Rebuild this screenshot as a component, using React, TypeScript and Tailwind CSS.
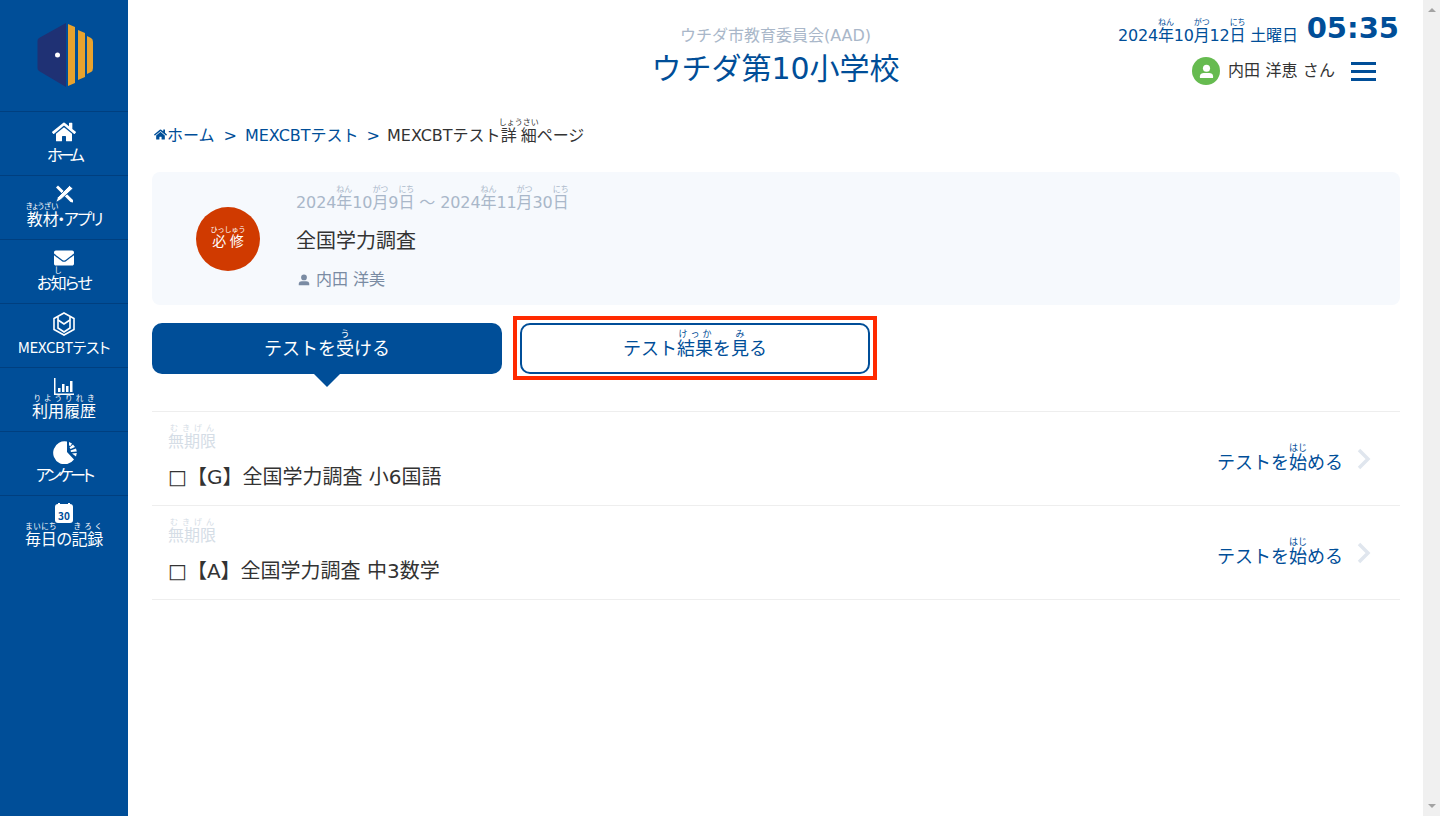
import type { JSX, ReactNode } from 'react';
import { FaHome, FaEnvelope } from 'react-icons/fa';

function R({ base, top, rt = '' }: { base: string; top: string; rt?: string }): JSX.Element {
  return (
    <ruby>
      {base}
      <rt className={rt}>{top}</rt>
    </ruby>
  );
}

function Side({ base, top }: { base: string; top: string }): JSX.Element {
  return <R base={base} top={top} rt="text-[7.5px] tracking-normal" />;
}

function Logo(): JSX.Element {
  return (
    <svg width="128" height="111" viewBox="0 0 128 111">
      <path d="M66 23V87L39 71Q37.500 70 37.500 68V41Q37.500 39 39 38Z" fill="#1f3174" />
      <circle cx="57.500" cy="55" r="2.500" fill="#fff" />
      <path d="M68 24L75 27V83L68 86Z" fill="#e8a32e" />
      <path d="M78 30L85 33V77L78 80Z" fill="#e8a32e" />
      <path d="M87 36L91 38Q93 39 93 42V68Q93 71 91 72L87 74Z" fill="#e8a32e" />
    </svg>
  );
}

function PersonIcon({ size, color }: { size: number; color: string }): JSX.Element {
  return (
    <svg width={size} height={size} viewBox="0 0 16 16" fill={color}>
      <circle cx="8" cy="4.500" r="3.800" />
      <path d="M1 15V13C1 10.500 3 9.500 5 9.500H11C13 9.500 15 10.500 15 13V15Z" />
    </svg>
  );
}

function ToolsIcon(): JSX.Element {
  return (
    <svg width="19" height="18" viewBox="0 0 19 18" fill="#fff">
      <path d="M1 2.500L3 0.500L18 15L18 17.500L15.500 17Z" />
      <path d="M14.500 0.500L18 3.500L6 14.500L1 17.500L2.500 12.500Z" stroke="#004e98" strokeWidth="0.800" />
    </svg>
  );
}

function CubeIcon(): JSX.Element {
  return (
    <svg width="22" height="24" viewBox="0 0 22 24" fill="none" stroke="#fff" strokeWidth="1.600">
      <path d="M11 1L21 6.500V17.500L11 23L1 17.500V6.500Z" />
      <path d="M5 5V16L11 20L17 16V5" />
      <path d="M5 8L11 12L17 8" />
    </svg>
  );
}

function ChartIcon(): JSX.Element {
  return (
    <svg width="20" height="18" viewBox="0 0 20 18" fill="#fff">
      <path d="M0 0H1.500V15.500H20V17H0Z" />
      <rect x="4" y="10" width="2.500" height="4" />
      <rect x="8" y="6" width="2.500" height="8" />
      <rect x="12" y="8" width="2.500" height="6" />
      <rect x="16" y="3" width="2.500" height="11" />
    </svg>
  );
}

function PieIcon(): JSX.Element {
  return (
    <svg width="24" height="24" viewBox="0 0 24 24" fill="#fff">
      <path d="M14 1.500V12L21 19.500A11.500 11.500 0 1 1 14 1.500Z" />
      <path d="M16 2L19 3.500L17.500 6L16 5.500Z" />
      <path d="M20 4.500L22 7L17.500 9L16.500 7.500Z" />
      <path d="M23 8.500L23.800 11.500L18 12L17.500 10.500Z" />
      <path d="M23.800 13L23 16.500L19 13.500Z" />
    </svg>
  );
}

function CalendarIcon(): JSX.Element {
  return (
    <div className="relative flex h-[19px] w-[18px] items-end justify-center rounded-[3px] bg-white">
      <span className="absolute left-[3px] top-[-1px] h-[4px] w-[2px] bg-white" />
      <span className="absolute right-[3px] top-[-1px] h-[4px] w-[2px] bg-white" />
      <span className="mb-[2px] text-[10px] font-bold leading-[11px] text-[#004e98]">30</span>
    </div>
  );
}

const navItems: { icon: JSX.Element; label: ReactNode; iconClass: string; labelClass: string }[] = [
  { icon: <FaHome size={24} color="#fff" />, label: 'ホーム', iconClass: '', labelClass: 'tracking-[-4px]' },
  {
    icon: <ToolsIcon />,
    label: <><Side base="教材" top="きょうざい" />・アプリ</>,
    iconClass: '-translate-y-[2px]',
    labelClass: 'tracking-[-1.500px]',
  },
  {
    icon: <FaEnvelope size={20} color="#fff" />,
    label: <>お<Side base="知" top="し" />らせ</>,
    iconClass: '-translate-y-[2px]',
    labelClass: 'tracking-[-1.500px]',
  },
  { icon: <CubeIcon />, label: 'MEXCBTテスト', iconClass: '', labelClass: 'translate-y-[1px] text-[15px] tracking-[-0.400px]' },
  { icon: <ChartIcon />, label: <Side base="利用履歴" top="りようりれき" />, iconClass: '-translate-y-[1px]', labelClass: '' },
  { icon: <PieIcon />, label: 'アンケート', iconClass: 'ml-[2px]', labelClass: 'tracking-[-3px]' },
  {
    icon: <CalendarIcon />,
    label: <><Side base="毎日" top="まいにち" />の<Side base="記録" top="きろく" /></>,
    iconClass: '-translate-y-[3px]',
    labelClass: 'tracking-[-0.300px]',
  },
];

function Sidebar(): JSX.Element {
  return (
    <aside className="h-full w-[128px] shrink-0 bg-[#004e98] text-white">
      <Logo />
      <nav className="font-['Noto_Sans_CJK_JP',sans-serif] [font-feature-settings:'palt']">
        {navItems.map((item, i) => (
          <a key={i} className="flex h-[64px] flex-col items-center border-t border-[#003f7f] pt-[8px]">
            <div className={`flex h-[24px] items-center justify-center ${item.iconClass}`}>{item.icon}</div>
            <div className="-mt-[1px] flex h-[22px] items-end whitespace-nowrap text-[16px] leading-[22px]">
              <div className={item.labelClass}>{item.label}</div>
            </div>
          </a>
        ))}
      </nav>
    </aside>
  );
}

function Header(): JSX.Element {
  return (
    <header className="grid h-[111px] grid-cols-[1fr_auto_1fr]">
      <div />
      <div className="flex flex-col items-center pt-[25px]">
        <p className="text-[16px] leading-[22px] text-[#a9b7c9]">ウチダ市教育委員会(AAD)</p>
        <h1 className="mt-[1px] text-[30px] leading-[42px] text-[#004e98]">ウチダ第10小学校</h1>
      </div>
      <div className="flex flex-col items-end pr-[24px] pt-[8px]">
        <div className="flex h-[40px] items-center gap-[9px] text-[#004e98]">
          <span className="mt-[10px] text-[16px] leading-[24px] tracking-[-0.200px]">
            2024<R base="年" top="ねん" />10<R base="月" top="がつ" />12<R base="日" top="にち" /> 土曜日
          </span>
          <span className="text-[29px] font-bold leading-[40px]">05:35</span>
        </div>
        <div className="mt-[9px] flex items-center pr-[23px]">
          <span className="flex h-[28px] w-[28px] items-center justify-center rounded-full bg-[#66bb50]">
            <PersonIcon size={15} color="#fff" />
          </span>
          <span className="ml-[8px] text-[16px] tracking-[0.100px] text-[#333]">内田 洋恵 さん</span>
          <div className="ml-[16px] flex w-[25px] flex-col gap-[5px]">
            <span className="h-[3px] bg-[#004e98]" />
            <span className="h-[3px] bg-[#004e98]" />
            <span className="h-[3px] bg-[#004e98]" />
          </div>
        </div>
      </div>
    </header>
  );
}

function Breadcrumb(): JSX.Element {
  return (
    <div className="flex h-[48px] items-baseline pt-[7px] text-[16px] text-[#004e98]">
      <FaHome size={13} className="ml-[2px]" />
      <span>ホーム</span>
      <span className="ml-[9px] mr-[8px]">&gt;</span>
      <span>MEXCBTテスト</span>
      <span className="ml-[8px] mr-[7px]">&gt;</span>
      <span className="text-[#333]">
        MEXCBTテスト<R base="詳細" top="しょうさい" />ページ
      </span>
    </div>
  );
}

function InfoCard(): JSX.Element {
  return (
    <section className="mt-[13px] flex h-[133px] items-center rounded-[8px] bg-[#f6f9fd]">
      <div className="ml-[44px] flex h-[64px] w-[64px] items-center justify-center rounded-full bg-[#d03a00] text-[14px] text-white">
        <R base="必修" top="ひっしゅう" rt="text-[7px]" />
      </div>
      <div className="ml-[36px]">
        <p className="-translate-y-[1px] text-[16px] leading-[24px] tracking-[-0.100px] text-[#a9b7c9]">
          2024<R base="年" top="ねん" />10<R base="月" top="がつ" />9<R base="日" top="にち" /> 〜 2024<R base="年" top="ねん" />11<R base="月" top="がつ" />30<R base="日" top="にち" />
        </p>
        <h2 className="mt-[10px] text-[20px] leading-[30px] text-[#333]">全国学力調査</h2>
        <p className="mt-[12px] flex items-center text-[16px] leading-[24px] text-[#7a8ba3]">
          <span className="ml-[2px]">
            <PersonIcon size={12} color="#7a8ba3" />
          </span>
          <span className="ml-[6px]">内田 洋美</span>
        </p>
      </div>
    </section>
  );
}

function Tabs(): JSX.Element {
  return (
    <div className="mt-[18px] flex gap-[18px] text-[18px]">
      <button className="relative h-[51px] w-[350px] rounded-[10px] bg-[#004e98] pb-[6px] text-white">
        テストを<R base="受" top="う" />ける
        <span className="absolute left-[162px] top-[51px] h-0 w-0 border-x-[13px] border-t-[13px] border-x-transparent border-t-[#004e98]" />
      </button>
      <button className="relative h-[51px] w-[350px] rounded-[10px] border-2 border-[#004e98] pb-[6px] text-[#004e98]">
        テスト<R base="結果" top="けっか" />を<R base="見" top="み" />る
        <span className="absolute -bottom-[8px] -left-[9px] -right-[9px] -top-[9px] border-[4px] border-[#ff2a00]" />
      </button>
    </div>
  );
}

function TestRow({ name }: { name: string }): JSX.Element {
  return (
    <li className="flex h-[94px] items-center justify-between border-b border-[#eeeeee] pl-[16px] pr-[28px]">
      <div className="pb-[3px]">
        <p className="text-[16px] leading-[24px] text-[#d5dde6]">
          <R base="無期限" top="むきげん" />
        </p>
        <p className="mt-[9px] text-[20px] leading-[28px] text-[#333]">{name}</p>
      </div>
      <div className="flex items-center gap-[13px] text-[18px] text-[#004e98]">
        <span className="mt-[1px]">
          テストを<R base="始" top="はじ" />める
        </span>
        <svg width="16" height="22" viewBox="0 0 16 22" fill="none" stroke="#e0e6ee" strokeWidth="3.500">
          <path d="M3 2L12 11L3 20" />
        </svg>
      </div>
    </li>
  );
}

function Scrollbar(): JSX.Element {
  return (
    <div className="flex h-full w-[17px] shrink-0 flex-col items-center justify-between bg-[#f0f0f0] py-[8px]">
      <span className="h-0 w-0 border-x-[4px] border-b-[4px] border-x-transparent border-b-[#a3a3a3]" />
      <span className="h-0 w-0 border-x-[4px] border-t-[4px] border-x-transparent border-t-[#a3a3a3]" />
    </div>
  );
}

export default function App(): JSX.Element {
  return (
    <div className="flex h-[816px] w-[1440px] overflow-hidden bg-white font-['DejaVu_Sans','Noto_Sans_CJK_JP',sans-serif]">
      <Sidebar />
      <main className="min-w-0 flex-1">
        <Header />
        <div className="pl-[24px] pr-[23px]">
          <Breadcrumb />
          <InfoCard />
          <Tabs />
          <ul className="mt-[37px] border-t border-[#eeeeee]">
            <TestRow name="□【G】全国学力調査 小6国語" />
            <TestRow name="□【A】全国学力調査 中3数学" />
          </ul>
        </div>
      </main>
      <Scrollbar />
    </div>
  );
}
